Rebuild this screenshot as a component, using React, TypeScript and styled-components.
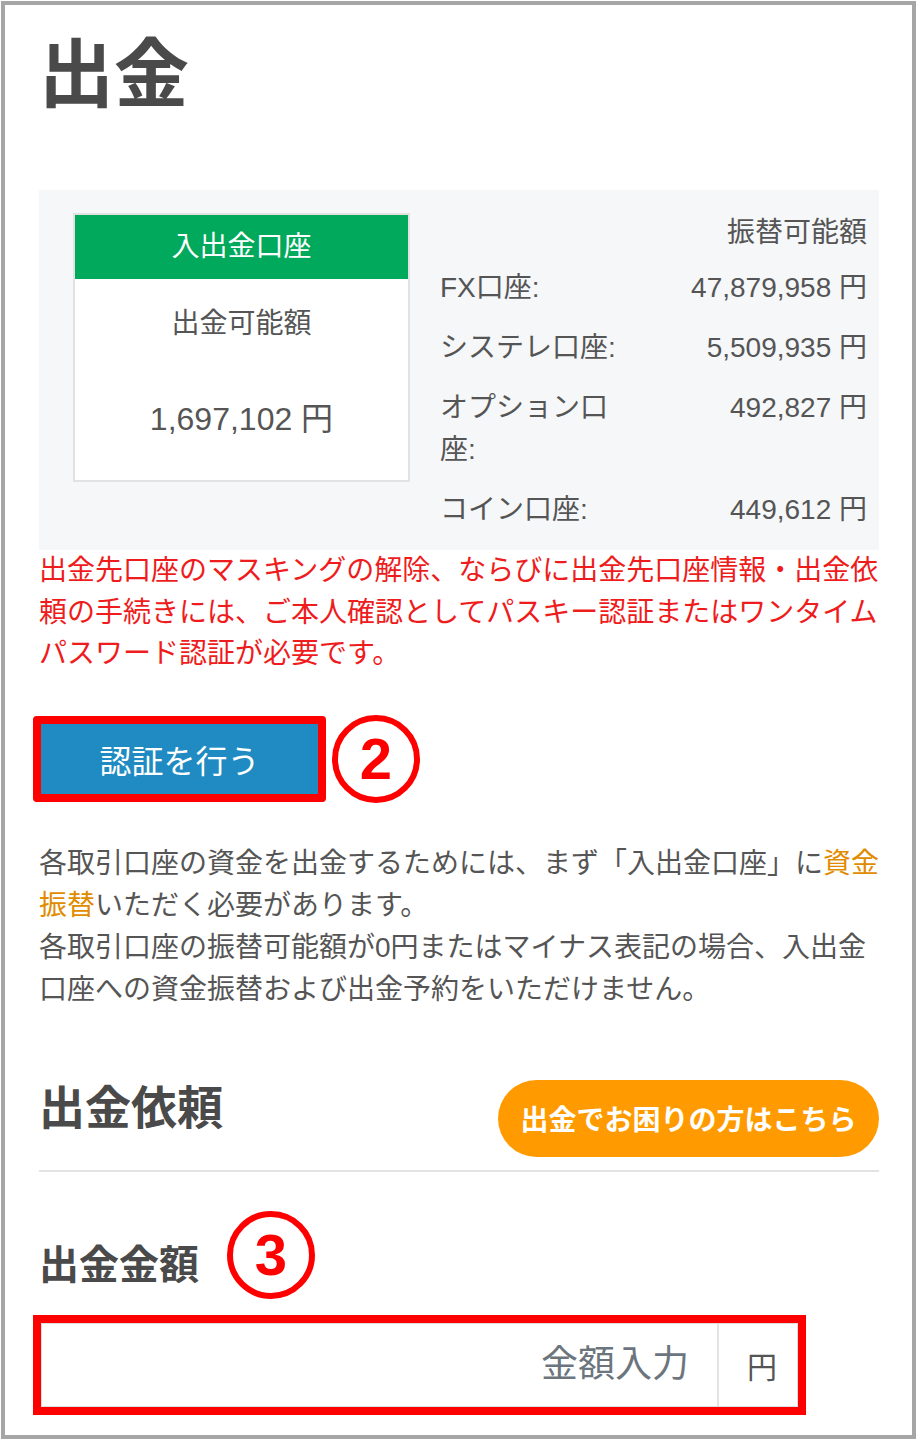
import React from 'react'
import styled, { createGlobalStyle } from 'styled-components'

const GlobalStyle = createGlobalStyle`
  html, body {
    margin: 0;
    padding: 0;
    background: #fff;
  }
  body {
    font-family: "Liberation Sans", "Noto Sans CJK JP", sans-serif;
    color: #555;
  }
`

const Frame = styled.div`
  box-sizing: border-box;
  width: 915px;
  height: 1438px;
  margin: 1px 0 0 1px;
  padding: 20px 33px 0 34px;
  border: 4px solid #a6a6a6;
  overflow: hidden;
`

const Content = styled.main`
  width: 840px;
`

const PageTitle = styled.h1`
  margin: 0;
  font-family: "Noto Sans CJK JP", sans-serif;
  font-size: 75px;
  font-weight: 700;
  line-height: 88px;
  color: #4a4a4a;
`

const Balances = styled.section`
  display: grid;
  grid-template-columns: 337px 1fr;
  column-gap: 30px;
  align-items: start;
  margin-top: 77px;
  padding: 22px 12px 10px 34px;
  background: #f6f7f9;
`

const AccountCard = styled.div`
  margin-top: 1px;
  border: 2px solid #e2e2e2;
  background: #fff;
  text-align: center;
`

const CardHeader = styled.div`
  height: 64px;
  line-height: 64px;
  background: #00a95c;
  color: #fff;
  font-size: 28px;
`

const CardBody = styled.div`
  padding: 24px 0 37px;
`

const CardLabel = styled.div`
  font-size: 28px;
  line-height: 42px;
`

const CardAmount = styled.div`
  margin-top: 50px;
  font-size: 32px;
  line-height: 48px;
`

const TransferList = styled.div`
  font-size: 28px;
  line-height: 42px;
`

const TransferHead = styled.div`
  padding-bottom: 4px;
  text-align: right;
`

const TransferRow = styled.div`
  display: grid;
  grid-template-columns: 184px 1fr;
  padding: 9px 0;
`

const RowValue = styled.span`
  text-align: right;
  white-space: nowrap;
`

const Notice = styled.p`
  margin: 0 -4px 0 0;
  font-size: 28px;
  line-height: 41.5px;
  color: #ee1c1c;
`

const StepRow = styled.div<{ $top: number; $gap: number }>`
  display: flex;
  align-items: center;
  gap: ${p => p.$gap}px;
  margin-top: ${p => p.$top}px;
`

const AuthButton = styled.button`
  width: 277px;
  height: 70px;
  margin-left: 2px;
  padding: 0;
  border: none;
  border-radius: 1px;
  background: #1f8bc2;
  color: #fff;
  font-family: "Liberation Sans", "Noto Sans CJK JP", sans-serif;
  font-size: 32px;
  /* red annotation frame from the manual */
  box-shadow: 0 0 0 8px #ff0000;
`

const StepBadge = styled.span`
  display: inline-flex;
  align-items: center;
  justify-content: center;
  box-sizing: border-box;
  width: 88px;
  height: 88px;
  border: 6px solid #ff0000;
  border-radius: 50%;
  color: #ff0000;
  font-family: "Liberation Sans", sans-serif;
  font-size: 58px;
  font-weight: 700;
  line-height: 1;
`

const Guide = styled.p`
  margin: 40px -4px 0 0;
  font-size: 28px;
  line-height: 42px;
`

const GuideLink = styled.span`
  color: #e08c00;
`

const RequestHeader = styled.div`
  display: flex;
  justify-content: space-between;
  align-items: flex-start;
  margin-top: 69px;
  padding-bottom: 13px;
  border-bottom: 2px solid #e3e3e3;
`

const SectionTitle = styled.h2<{ $size: number; $top?: number }>`
  margin: ${p => p.$top || 0}px 0 0;
  font-family: "Noto Sans CJK JP", sans-serif;
  font-size: ${p => p.$size}px;
  font-weight: 700;
  line-height: ${p => p.$size + 2}px;
  color: #4a4a4a;
`

const HelpButton = styled.button`
  width: 381px;
  height: 77px;
  border: none;
  border-radius: 39px;
  background: #ff9b00;
  color: #fff;
  font-family: "Noto Sans CJK JP", sans-serif;
  font-size: 28px;
  font-weight: 700;
`

const AmountGroup = styled.div`
  display: flex;
  box-sizing: border-box;
  width: 757px;
  height: 84px;
  margin: 24px 0 0 2px;
  border: 1px solid #dedede;
  background: #fff;
  box-shadow: 0 0 0 8px #ff0000;
`

const AmountInput = styled.input`
  flex: 1;
  min-width: 0;
  padding: 0 28px 0 0;
  border: none;
  outline: none;
  text-align: right;
  font-family: "Liberation Sans", "Noto Sans CJK JP", sans-serif;
  font-size: 37px;
  color: #555;
  &::placeholder {
    color: #6c757d;
  }
`

const Addon = styled.span`
  display: flex;
  align-items: center;
  justify-content: center;
  width: 80px;
  padding-left: 8px;
  box-sizing: border-box;
  border-left: 2px solid #e3e3e3;
  font-size: 30px;
  color: #555;
`

const transfers = [
  { label: 'FX口座:', value: '47,879,958 円' },
  { label: 'システレ口座:', value: '5,509,935 円' },
  { label: 'オプション口座:', value: '492,827 円' },
  { label: 'コイン口座:', value: '449,612 円' },
]

export default function App() {
  return (
    <>
      <GlobalStyle />
      <Frame>
        <Content>
          <PageTitle>出金</PageTitle>

          <Balances>
            <AccountCard>
              <CardHeader>入出金口座</CardHeader>
              <CardBody>
                <CardLabel>出金可能額</CardLabel>
                <CardAmount>1,697,102 円</CardAmount>
              </CardBody>
            </AccountCard>
            <TransferList>
              <TransferHead>振替可能額</TransferHead>
              {transfers.map(t => (
                <TransferRow key={t.label}>
                  <span>{t.label}</span>
                  <RowValue>{t.value}</RowValue>
                </TransferRow>
              ))}
            </TransferList>
          </Balances>

          <Notice>
            出金先口座のマスキングの解除、ならびに出金先口座情報・出金依頼の手続きには、ご本人確認としてパスキー認証またはワンタイムパスワード認証が必要です。
          </Notice>

          <StepRow $top={40} $gap={14}>
            <AuthButton>認証を行う</AuthButton>
            <StepBadge>2</StepBadge>
          </StepRow>

          <Guide>
            各取引口座の資金を出金するためには、まず「入出金口座」に<GuideLink>資金振替</GuideLink>いただく必要があります。
            <br />
            各取引口座の振替可能額が0円またはマイナス表記の場合、入出金口座への資金振替および出金予約をいただけません。
          </Guide>

          <RequestHeader>
            <SectionTitle $size={46}>出金依頼</SectionTitle>
            <HelpButton>出金でお困りの方はこちら</HelpButton>
          </RequestHeader>

          <StepRow $top={39} $gap={28}>
            <SectionTitle $size={40} $top={14}>出金金額</SectionTitle>
            <StepBadge>3</StepBadge>
          </StepRow>

          <AmountGroup>
            <AmountInput placeholder="金額入力" />
            <Addon>円</Addon>
          </AmountGroup>
        </Content>
      </Frame>
    </>
  )
}
